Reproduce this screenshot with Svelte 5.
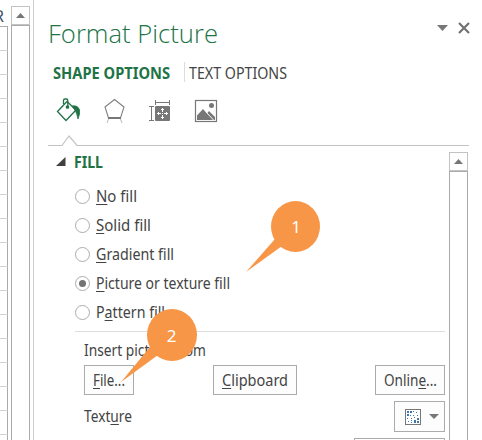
<script>
  const options = [
    { pre: '', key: 'N', post: 'o fill', w: 41 },
    { pre: '', key: 'S', post: 'olid fill', w: 55 },
    { pre: '', key: 'G', post: 'radient fill', w: 78 },
    { pre: '', key: 'P', post: 'icture or texture fill', w: 134 },
    { pre: 'P', key: 'a', post: 'ttern fill', w: 69 }
  ];
  let selected = $state(3);

  // Condenses a label horizontally to its design width.
  function fit(node, width) {
    const natural = node.getBoundingClientRect().width;
    node.style.transform = `scaleX(${width / natural})`;
  }
</script>

<div class="window">
  <div class="sheet">
    <div class="head"><span>R</span></div>
    {#each Array(18) as _}<div class="cell"></div>{/each}
  </div>
  <div class="scroll outer"><div class="up"><i></i></div><div class="track"></div></div>

  <section class="pane">
    <header>
      <h1><span class="t" use:fit={170}>Format Picture</span></h1>
      <svg width="36" height="14" viewBox="0 0 36 14">
        <path d="M1 4h11l-5.500 6z" fill="#777" />
        <path d="M23 2l10 10M33 2l-10 10" stroke="#737373" stroke-width="2.200" />
      </svg>
    </header>
    <nav>
      <b><span class="t" use:fit={117}>SHAPE OPTIONS</span></b>
      <span class="second"><span class="t" use:fit={98}>TEXT OPTIONS</span></span>
    </nav>
    <svg class="tools" width="421" height="57" viewBox="48 90 421 57" fill="none">
      <g stroke="#217346" stroke-width="1.300">
        <path d="M57.500 111.500L67 101.500L76 110L66 120.500z" />
        <path d="M63.500 104v-3.500q0-1.500 1.500-1.500h1.500q1.300 0 1.300 1.500v6" />
        <circle cx="67.500" cy="107" r="1.200" fill="#217346" />
        <path d="M72 106q6-1 7.500 4q.8 4-1.500 9q-1-5-2.500-8z" fill="#217346" stroke-width=".8" />
      </g>
      <path d="M114.500 99.500l9.500 7.500l-3.500 11h-12l-3.500-11z" stroke="#808080" stroke-width="1.100" />
      <path d="M108 118h13" stroke="#777" stroke-width="2" />
      <path d="M108.500 119l-1.500 4M120.500 119l1.500 4" stroke="#bbb" />
      <g stroke="#777">
        <path d="M155.500 102.500h14M155.500 100v5M169.500 100v5M151.500 106.500v14M149 106.500h5M149 120.500h5" />
        <rect x="155" y="106" width="15" height="15" rx="1" fill="#777" stroke="none" />
        <g fill="#fff" stroke="none">
          <path d="M162 108h1v4h-1zM161 109h3v1h-3zM162 115h1v4h-1zM161 117h3v1h-3zM157 113h4v1h-4zM158 112h1v3h-1zM164 113h4v1h-4zM166 112h1v3h-1zM162 113h1v1h-1z" />
        </g>
        <rect x="195.500" y="100.500" width="21" height="21" stroke-width="1.200" />
        <circle cx="211.500" cy="105.500" r="2.500" fill="#777" stroke="none" />
        <path d="M197 120v-4.500l6-6.500l4 4.500l2-2.500l6 6v3z" fill="#777" stroke="none" />
        <path d="M206.500 112.500l7 7.500" stroke="#fff" />
      </g>
      <path d="M48 145.500h14l7-9.500l8 9.500h392" stroke="#c3c3c3" stroke-width="1.200" />
    </svg>

    <div class="body">
      <div class="content">
        <h2>
          <svg width="10" height="10"><path d="M9.500 0v9H0z" fill="#404040" /></svg>
          <span class="t" use:fit={29}>FILL</span>
        </h2>
        <div class="radios">
          {#each options as o, i}
            <button class="radio" onclick={() => (selected = i)}>
              <i class:on={selected === i}></i>
              <span class="t" use:fit={o.w}>{o.pre}<u>{o.key}</u>{o.post}</span>
            </button>
          {/each}
        </div>
        <div class="source">
          <div class="label"><span class="t" use:fit={122}>Insert picture from</span></div>
          <div class="buttons">
            <button style:width="50px"><span class="t" use:fit={32}><u>F</u>ile...</span></button>
            <button style:width="84px"><span class="t" use:fit={66}><u>C</u>lipboard</span></button>
            <button style:width="70px"><span class="t" use:fit={53}>Onlin<u>e</u>...</span></button>
          </div>
          <div class="texture">
            <span class="t" use:fit={48}>Text<u>u</u>re</span>
            <button>
              <svg width="34" height="16">
                <rect x=".5" y=".5" width="15" height="15" fill="#fff" stroke="#777" />
                <path d="M2 2h2v2h-2zM5 2h2v2h-2zM2 5h2v2h-2zM8 2h1v1h-1zM11 3h1v1h-1zM5 6h1v1h-1zM8 6h1v1h-1zM2 9h1v1h-1zM12 6h1v1h-1zM9 8h1v1h-1zM12 9h2v2h-2zM6 9h1v1h-1zM9 11h2v2h-2zM12 12h2v2h-2zM6 11h1v1h-1zM3 12h1v1h-1zM6 13h1v1h-1zM9 13h2v1h-2z" fill="#3f76ae" />
                <path d="M24 5h10l-5 5z" fill="#777" />
              </svg>
            </button>
          </div>
          <div class="field"></div>
        </div>
      </div>
      <div class="scroll inner"><div class="up"><i></i></div><div class="track"></div></div>
    </div>
  </section>

  <svg class="callouts" width="482" height="440">
    <g fill="#f79646">
      <ellipse cx="295.500" cy="226.500" rx="24.500" ry="25.500" />
      <path d="M246 272L275 239L282 246z" />
      <ellipse cx="172" cy="335" rx="25" ry="26" />
      <path d="M121 382L150 347L158 355z" />
    </g>
    <g class="num"><text x="296" y="233">1</text><text x="171.500" y="342">2</text></g>
  </svg>
</div>

<style>
  :global(body) { overflow: hidden; background: #fff; }
  .window { position: relative; display: flex; width: 482px; height: 440px; overflow: hidden; background: #fff; color: #444; font: 15.5px/20px "Noto Sans", "Open Sans", sans-serif; }
  .window :is(h1, h2) { margin: 0; }
  .t { display: inline-block; white-space: nowrap; transform-origin: 0 50%; }
  button { padding: 0; font: inherit; color: inherit; }
  u { text-decoration-thickness: 1px; text-underline-offset: 2px; text-decoration-skip-ink: none; }
  .sheet { width: 11px; flex: none; overflow: hidden; }
  .head { height: 27px; border-bottom: 1px solid #ababab; box-sizing: border-box; width: 8px; overflow: hidden; display: flex; justify-content: flex-end; color: #44546a; font-size: 16px; padding-top: 6px; padding-right: 4px; }
  .cell { width: 8px; height: 24px; box-sizing: border-box; border-right: 1px solid #ababab; border-bottom: 1px solid #d4d4d4; }
  .scroll { box-sizing: border-box; width: 19px; flex: none; display: flex; flex-direction: column; }
  .up { height: 19px; box-sizing: border-box; border: 1px solid #c3c3c3; display: grid; place-items: center; }
  .up i { width: 9px; height: 5px; background: #777; clip-path: polygon(50% 0, 100% 100%, 0 100%); }
  .track { flex: 1; border: solid #ababab; border-width: 1px 1px 0; }
  .outer { padding-top: 6px; }
  .pane { margin-left: 3px; border-left: 1px solid #cfcfcf; flex: 1; padding-left: 14px; display: flex; flex-direction: column; min-width: 0; }
  header { height: 60px; display: flex; justify-content: space-between; padding: 21px 10px 0 0; box-sizing: border-box; }
  header svg { flex: none; }
  h1 { font: 300 26.5px/24px "Open Sans", "Noto Sans", sans-serif; color: #217346; }
  nav { height: 30px; display: flex; align-items: flex-start; padding: 2px 0 0 5px; box-sizing: border-box; }
  nav b { width: 131px; flex: none; color: #217346; }
  .second { border-left: 1px solid #ddd; padding-left: 4px; height: 20px; }
  nav .t { margin-top: 1px; }
  .tools { display: block; flex: none; }
  .body { flex: 1; display: flex; min-height: 0; overflow: hidden; }
  .content { width: 401px; flex: none; }
  h2 { height: 35px; display: flex; align-items: flex-start; padding: 5px 0 0 8px; box-sizing: border-box; font-size: 15.5px; line-height: 20px; color: #217346; }
  h2 svg { margin: 5px 8px 0 0; }
  .radios { height: 149px; margin: 0 4px 0 27px; border-bottom: 1px solid #ddd; }
  .radio { display: flex; align-items: center; height: 29px; border: 0; background: none; text-align: left; }
  .radio .t { margin-top: -1px; }
  .radio i { width: 15px; height: 15px; box-sizing: border-box; border: 1px solid #ababab; border-radius: 50%; margin-right: 6px; display: grid; place-items: center; }
  .radio i.on::after { content: ""; width: 7px; height: 7px; border-radius: 50%; background: #737373; }
  .source { padding: 8px 4px 0 36px; }
  .label { height: 25px; }
  .buttons { display: flex; justify-content: space-between; }
  .source button { height: 30px; box-sizing: border-box; border: 1px solid #ababab; background: #fdfdfd; padding: 0 0 0 8px; text-align: left; }
  .texture { display: flex; justify-content: space-between; padding-top: 6px; }
  .texture > .t { margin-top: 5px; }
  .texture button { width: 51px; height: 31px; padding: 0 0 0 10px; display: flex; align-items: center; }
  .field { margin: 6px 0 0 auto; width: 91px; box-sizing: border-box; height: 30px; border: 1px solid #ababab; }
  .inner { padding-top: 5px; }
  .callouts { position: absolute; inset: 0; pointer-events: none; }
  .num { fill: #fff; font: 17px "Noto Sans", sans-serif; text-anchor: middle; }
</style>
